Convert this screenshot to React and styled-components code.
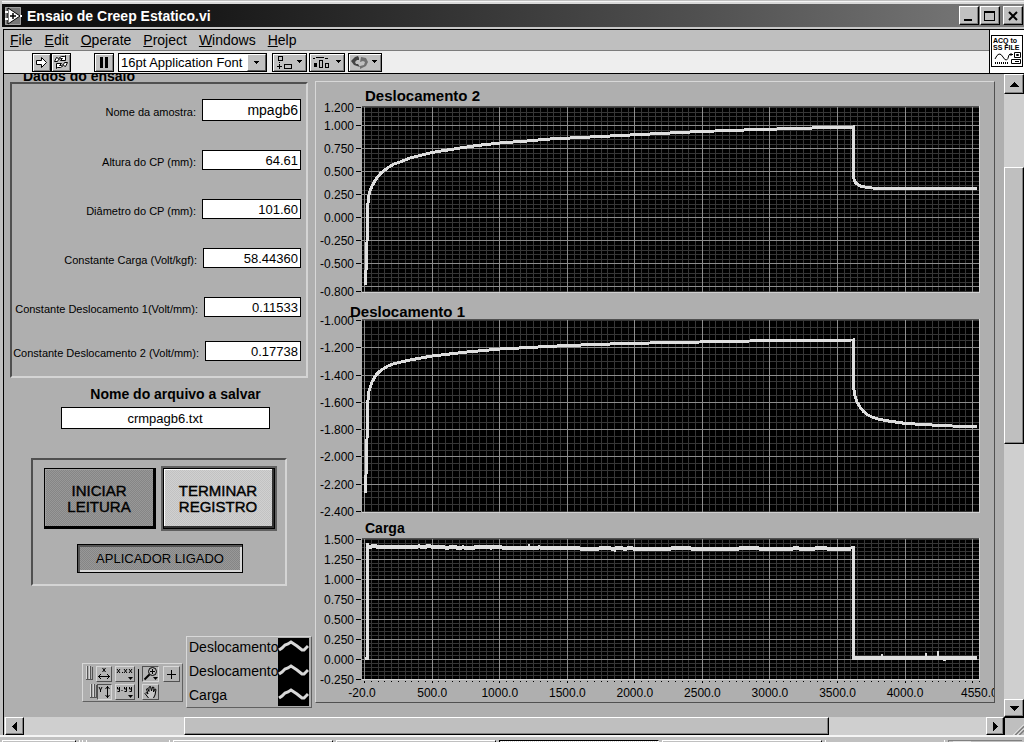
import React from "react";
import styled, { createGlobalStyle, css } from "styled-components";

const GlobalStyle = createGlobalStyle`
  *, *::before, *::after { box-sizing: border-box; }
  body { margin: 0; background: #c0c0c0; font-family: "Liberation Sans", Arial, sans-serif; color: #000; }
  button, input, select { font-family: inherit; color: #000; border-radius: 0; }
  h1, h2, p { margin: 0; }
`;

const sans = '"Liberation Sans", Arial, sans-serif';

const raised = css`
  border: 1px solid;
  border-color: #fff #000 #000 #fff;
  box-shadow: inset -1px -1px 0 #808080;
`;

/* ---------- window frame ---------- */

const Window = styled.div`
  min-height: 100vh;
  display: flex;
  flex-direction: column;
  background: #c0c0c0;
  overflow: hidden;
`;

const TitleBar = styled.header`
  display: flex;
  align-items: center;
  height: 25px;
  margin: 4px 0 0 2px;
  padding: 0 1px 0 3px;
  background: linear-gradient(90deg, #0c0c0c 0%, #161616 18%, #505050 68%, #7c7c7c 100%);
  box-shadow: 0 -2px 0 #d8d8d8, 0 -3px 0 #f4f4f4;
  border-bottom: 2px solid #c8c8c8;
`;

const Title = styled.h1`
  flex: 1;
  padding-left: 5px;
  color: #fff;
  font: bold 14px/20px ${sans};
`;

const CaptionButton = styled.button`
  ${raised}
  width: 20px;
  height: 19px;
  padding: 0;
  margin-left: ${(p) => (p.$apart ? 3 : 1)}px;
  background: #c0c0c0;
  display: grid;
  place-items: center;
`;

const Bars = styled.div`
  display: flex;
  margin-left: 3px;
  border: solid #000;
  border-width: 1px 0 1px 1px;
  background: #fff;
`;

const BarStack = styled.div`
  flex: 1;
  min-width: 0;
`;

const MenuBar = styled.nav`
  display: flex;
  align-items: center;
  gap: 12px;
  height: 21px;
  padding-left: 6px;
  background: #bfbfbf;
  border-bottom: 1px solid #7c7c7c;
`;

const MenuItem = styled.a`
  color: #000;
  text-decoration: none;
  font: 14px/18px ${sans};
`;

const ToolBar = styled.div`
  display: flex;
  align-items: center;
  height: 22px;
  padding-left: 28px;
  background: #eee;
`;

const ToolButton = styled.button`
  flex: none;
  width: ${(p) => p.$w}px;
  height: 19px;
  margin-left: ${(p) => p.$gap || 0}px;
  padding: 0;
  display: grid;
  place-items: center;
  background: #c0c0c0;
  border: 1px solid #000;
  box-shadow: inset 1px 1px 0 #fff, inset -1px -1px 0 #808080;
`;

const FontPicker = styled.div`
  position: relative;
  width: 149px;
  height: 19px;
  margin: 0 2px 0 4px;
`;

const FontSelect = styled.select`
  appearance: none;
  width: 100%;
  height: 19px;
  padding: 0 0 0 2px;
  background: #fff;
  border: 1px solid #000;
  font: 13px/16px ${sans};
`;

const PickerArrow = styled.span`
  position: absolute;
  top: 1px;
  right: 1px;
  width: 19px;
  height: 17px;
  display: grid;
  place-items: center;
  background: #c0c0c0;
  border: 1px solid;
  border-color: #fff #555 #555 #fff;
  pointer-events: none;
`;

const ViIcon = styled.div`
  flex: none;
  width: 35px;
  padding: 5px 1px 0;
  border-left: 1px solid #000;
`;

const ViIconFace = styled.div`
  height: 32px;
  padding: 1px;
  border: 1px solid #000;
  font: bold 7px/7px ${sans};
  white-space: nowrap;
  overflow: hidden;
  svg { display: block; }
`;

/* ---------- body ---------- */

const Body = styled.div`
  flex: 1;
  display: flex;
  margin-left: 3px;
  border-left: 1px solid #000;
`;

const FrontPanel = styled.main`
  flex: 1;
  min-width: 0;
  display: flex;
  align-items: flex-start;
  background: #afafaf;
`;

const LeftColumn = styled.div`
  flex: none;
  width: 311px;
  display: flex;
  flex-direction: column;
`;

const PanelTitle = styled.h2`
  display: flex;
  align-items: flex-end;
  height: 8px;
  padding-left: 19px;
  overflow: hidden;
  font: bold 14px/12px ${sans};
`;

const sunken = css`
  border: 2px solid;
  border-color: #505050 #d4d4d4 #d4d4d4 #505050;
`;

const DataPanel = styled.div`
  ${sunken}
  display: flex;
  flex-direction: column;
  gap: 29px;
  height: 296px;
  margin: 0 7px 0 6px;
  padding: 15px 5px 0 0;
`;

const FieldRow = styled.div`
  display: flex;
  align-items: center;
  justify-content: flex-end;
  gap: 6px;
  margin-top: ${(p) => (p.$tight ? -5 : 0)}px;
`;

const FieldLabel = styled.label`
  font: 11px/14px ${sans};
  white-space: nowrap;
  padding-top: 3px;
`;

const FieldInput = styled.input`
  width: ${(p) => p.$w}px;
  height: ${(p) => p.$h}px;
  padding: 0 2px;
  background: #fff;
  border: 1px solid #000;
  text-align: ${(p) => p.$align || "right"};
  font: ${(p) => (p.$small ? 13 : 14)}px/18px ${sans};
`;

const FileBlock = styled.div`
  display: flex;
  flex-direction: column;
  align-items: center;
  gap: 5px;
  margin: 8px 7px 0 25px;
  width: 272px;
`;

const FileLabel = styled.label`
  font: bold 14px/16px ${sans};
  padding-left: 21px;
`;

const ControlPanel = styled.section`
  ${sunken}
  width: 256px;
  height: 128px;
  margin: 29px 0 0 27px;
  padding: 6px 0 0 11px;
`;

const ButtonRow = styled.div`
  display: flex;
  align-items: center;
  gap: 5px;
`;

const dither = (a, b) => `repeating-conic-gradient(${a} 0% 25%, ${b} 0% 50%) 0 0 / 2px 2px`;

const BigButton = styled.button`
  width: ${(p) => (p.$lit ? 116 : 112)}px;
  height: ${(p) => (p.$lit ? 65 : 61)}px;
  padding: 0 2px 0 0;
  font: 500 15px/16px ${sans};
  -webkit-text-stroke: 0.4px #000;
  background: ${(p) => (p.$lit ? dither("#c2c2c2", "#d0d0d0") : dither("#868686", "#989898"))};
  border: ${(p) => (p.$lit ? "2px solid #606060" : "1px solid #000")};
  box-shadow: ${(p) =>
    p.$lit
      ? "inset 0 0 0 1px #000, inset -3px -3px 0 #303030, inset 2px 2px 0 #fff"
      : "inset -2px -2px 0 #000, inset 1px 1px 0 #a0a0a0"};
`;

const StatusButton = styled.button`
  display: block;
  width: 166px;
  height: 29px;
  margin: 13px 0 0 33px;
  padding: 0;
  font: 13px/16px ${sans};
  background: ${dither("#868686", "#989898")};
  border: 1px solid #000;
  box-shadow: inset 2px 2px 0 #555, inset -2px -2px 0 #d8d8d8;
`;

const BottomRow = styled.div`
  display: flex;
  align-items: center;
  gap: 3px;
  height: 72px;
  margin: 50px 0 0 78px;
`;

const Palette = styled.div`
  flex: none;
  display: flex;
  gap: 3px;
  width: 101px;
  height: 39px;
  margin-top: 21px;
  padding: 2px 2px 0 3px;
  border: 1px solid;
  border-color: #d8d8d8 #606060 #606060 #d8d8d8;
`;

const PaletteColumn = styled.div`
  display: flex;
  flex-direction: column;
  gap: 2px;
`;

const PaletteRow = styled.div`
  display: flex;
  gap: ${(p) => p.$gap}px;
  padding-left: ${(p) => p.$indent || 0}px;
`;

const PaletteButton = styled.button`
  width: ${(p) => p.$w}px;
  height: 16px;
  padding: 0;
  display: grid;
  place-items: center;
  background: #b4b4b4;
  border: 1px solid;
  border-color: ${(p) => (p.$down ? "#505050 #d8d8d8 #d8d8d8 #505050" : "#d8d8d8 #505050 #505050 #d8d8d8")};
`;

const Divider = styled.div`
  width: 2px;
  height: 29px;
  margin-top: 3px;
  background: #000;
`;

const Legend = styled.div`
  flex: none;
  display: flex;
  width: 126px;
  height: 72px;
  padding: 1px 2px 1px 2px;
  border: 1px solid;
  border-color: #d8d8d8 #606060 #606060 #d8d8d8;
`;

const LegendNames = styled.div`
  flex: 1;
  margin-top: -3px;
  font: 14px/24px ${sans};
`;

const LegendName = styled.div`
  width: 89px;
  height: 24px;
`;

const LegendSwatches = styled.svg`
  flex: none;
  display: block;
  background: #000;
`;

/* ---------- charts ---------- */

const ChartPanel = styled.section`
  flex: 1;
  min-width: 0;
  height: 622px;
  margin: 7px 9px 14px 0;
  padding-right: 14px;
  overflow: hidden;
  border: 1px solid;
  border-color: #d8d8d8 #505050 #505050 #d8d8d8;
`;

const ChartTitle = styled.h2`
  display: flex;
  align-items: flex-end;
  height: ${(p) => p.$h}px;
  padding: 0 0 ${(p) => p.$drop}px ${(p) => p.$indent}px;
  font: bold ${(p) => p.$size}px/14px ${sans};
`;

const ChartRow = styled.div`
  display: grid;
  grid-template-columns: 46px 1fr;
`;

const AxisSvg = styled.svg`
  display: block;
  width: 46px;
  overflow: visible;
  font: 12px ${sans};
`;

const PlotSvg = styled.svg`
  display: block;
  width: 100%;
  background: #000;
`;

const XAxisSvg = styled.svg`
  display: block;
  width: 100%;
  overflow: visible;
  font: 12px ${sans};
`;

/* ---------- scroll bars and task bar ---------- */

const VScroll = styled.div`
  flex: none;
  display: flex;
  flex-direction: column;
  width: 20px;
  background: #cfcfcf;
`;

const HScroll = styled.div`
  display: flex;
  height: 18px;
  margin-left: 3px;
  padding-left: 1px;
  border-left: 1px solid #000;
  background: #cfcfcf;
`;

const ScrollButton = styled.button`
  flex: none;
  width: ${(p) => p.$w}px;
  height: ${(p) => p.$h}px;
  padding: 0;
  display: grid;
  place-items: center;
  background: #c0c0c0;
  ${raised}
`;

const Track = styled.div`
  flex: ${(p) => p.$part} 1 0;
`;

const Thumb = styled.div`
  flex: ${(p) => p.$part} 1 0;
  background: #bfbfbf;
  ${raised}
`;

const Corner = styled.div`
  flex: none;
  width: 20px;
  background: #bfbfbf;
  border-top: 1px solid #000;
  border-left: 1px solid #000;
`;

const TaskBar = styled.footer`
  display: flex;
  gap: 3px;
  height: 8px;
  padding: 3px 2px 0;
  background: #c0c0c0;
  border-top: 2px solid #f4f4f4;
`;

const taskPart = css`
  flex: ${(p) => p.$part} 1 ${(p) => p.$part}px;
`;

const TaskItem = styled.div`
  ${taskPart}
  padding-left: 7px;
  border: solid;
  border-width: 1px 1px 0 1px;
  border-color: ${(p) => (p.$active ? "#000 #fff #fff #000" : "#fff #000 #000 #fff")};
  background: ${(p) => (p.$active ? dither("#fff", "#d8d8d8") : "#c0c0c0")};
`;

const TaskGap = styled.div`
  ${taskPart}
  border: solid;
  border-width: 0 1px;
  border-color: #808080 #fff;
`;

const TrayBox = styled.div`
  ${taskPart}
  padding-left: 4px;
  border: solid #808080;
  border-width: 1px 0 0 1px;
`;

const Crumb = styled.svg`
  display: block;
`;

/* ---------- data ---------- */

const fields = [
  { id: "amostra", label: "Nome da amostra:", value: "mpagb6", w: 99, h: 22 },
  { id: "altura", label: "Altura do CP (mm):", value: "64.61", w: 99, h: 20, small: true },
  { id: "diametro", label: "Diâmetro do CP (mm):", value: "101.60", w: 99, h: 20, small: true },
  { id: "carga", label: "Constante Carga (Volt/kgf):", value: "58.44360", w: 98, h: 20, small: true },
  { id: "desloc1", label: "Constante Deslocamento 1(Volt/mm):", value: "0.11533", w: 97, h: 20, small: true },
  { id: "desloc2", label: "Constante Deslocamento 2 (Volt/mm):", value: "0.17738", w: 96, h: 20, small: true, tight: true },
];

const X_MIN = -20;
const X_MAX = 4555;
const PLOT_W = 618;

const creep2 =
  "3.5,179 5,136 5.5,104 6.5,91 8,85 10,80 14,73 19,67 23,64 27,61 32,58 38,56 48,52 60,49 70,46.5 95,42.5 115,39.5 138,37 165,35 188,33 238,30.5 288,28 338,25.5 388,23.8 438,22.3 491,21 491,65 492,73 493,76 495,78 499,80.5 510,82 535,82.5 615,82.5";
const creep1 =
  "3.5,174 5,120 6,81 7,72 10,63 14,56 17,53 21,50 26,47 31,45 39,43 48,41 70,37 105,33 138,30 205,26.5 248,25 288,24 338,23 388,22 438,21.5 491,21 491,60 492,71 493,77 495,83 498,88 501,92 505,95.5 510,98 516,100 523,101.5 544,104.5 578,106.5 615,108";

const noise = [0, 1, -1, 0, 0, 1, 0, -1, 1, 0, 0, -1, 0, 1, 0, 0];
const loadBand = (() => {
  const pts = [];
  for (let x = 5; x < 490; x += 4) {
    const base = 8.5 + (Math.min(x, 240) / 240) * 2;
    pts.push(`${x},${base + noise[(x * 7 + (x >> 4)) % 16] * 0.6}`);
  }
  return pts.join(" ");
})();

const chartDefs = [
  {
    name: "Deslocamento 2", titleH: 24, drop: 3, indent: 49, size: 15, h: 187,
    top: 1.2, bottom: -0.8, y0: 1, span: 184,
    ticks: [1.2, 1.0, 0.75, 0.5, 0.25, 0, -0.25, -0.5, -0.8], major: [1, 0.75, 0.5, 0.25, 0, -0.25, -0.5, -0.75],
    curves: [{ points: creep2, width: 3 }],
  },
  {
    name: "Deslocamento 1", titleH: 26, drop: 0, indent: 34, size: 15, h: 194,
    top: -1, bottom: -2.4, y0: 1, span: 191,
    ticks: [-1, -1.2, -1.4, -1.6, -1.8, -2, -2.2, -2.4], major: [-1.2, -1.4, -1.6, -1.8, -2, -2.2],
    curves: [{ points: creep1, width: 3 }],
  },
  {
    name: "Carga", titleH: 25, drop: 3, indent: 49, size: 14, h: 142,
    top: 1.5, bottom: -0.25, y0: 1, span: 140,
    ticks: [1.5, 1.25, 1, 0.75, 0.5, 0.25, 0, -0.25], major: [1.25, 1, 0.75, 0.5, 0.25, 0],
    curves: [
      { points: "3,120 5,120 5,5", width: 3 },
      { points: loadBand, width: 4 },
      { points: "167,10 167,6", width: 2 },
      { points: "253,11 253,14", width: 2 },
      { points: "489,9 491,9 491,119", width: 3 },
      { points: "490,119.5 615,119.5", width: 4 },
      { points: "520,118 520,116", width: 2 },
      { points: "564,118 564,115", width: 2 },
      { points: "576,118 576,113", width: 2 },
      { points: "581,121.5 584,121.5", width: 2 },
    ],
  },
];

const yPos = (c, v) => Math.round(c.y0 + ((c.top - v) / (c.top - c.bottom)) * c.span);
const xPct = (v) => `${((v - X_MIN) / (X_MAX - X_MIN)) * 100}%`;
const range = (from, to, step) => {
  const out = [];
  for (let v = from; v <= to + step / 100; v += step) out.push(v);
  return out;
};

function Chart({ c }) {
  return (
    <>
      <ChartTitle $h={c.titleH} $drop={c.drop} $indent={c.indent} $size={c.size}>{c.name}</ChartTitle>
      <ChartRow>
        <AxisSvg height={c.h} aria-hidden="true">
          {c.ticks.map((t) => (
            <g key={t}>
              <text x="38" y={yPos(c, t) + 5} textAnchor="end">{t.toFixed(3)}</text>
              <rect x="40" y={yPos(c, t)} width="5" height="1" />
            </g>
          ))}
        </AxisSvg>
        <PlotSvg height={c.h} role="img" aria-label={c.name} shapeRendering="crispEdges">
          {range(0, 4550, 50).map((v) => (
            <line key={v} x1={xPct(v)} x2={xPct(v)} y1="0" y2="100%" stroke="#363636" />
          ))}
          {range(c.bottom, c.top, 0.05).map((v) => (
            <line key={v} x1="0" x2="100%" y1={yPos(c, v) + 0.5} y2={yPos(c, v) + 0.5} stroke="#363636" />
          ))}
          {range(0, 4500, 500).map((v) => (
            <line key={v} x1={xPct(v)} x2={xPct(v)} y1="0" y2="100%" stroke="#8c8c8c" />
          ))}
          {c.major.map((v) => (
            <line key={v} x1="0" x2="100%" y1={yPos(c, v) + 0.5} y2={yPos(c, v) + 0.5} stroke="#8c8c8c" />
          ))}
          <rect x="0" y="0" width="100%" height="1" fill="#505050" />
          <rect x="0" y={c.h - 1} width="100%" height="1" fill="#d0d0d0" />
          <line x1="100%" x2="100%" y1="0" y2="100%" stroke="#d0d0d0" strokeWidth="2" />
          <svg width="100%" height={c.h} viewBox={`0 0 ${PLOT_W} ${c.h}`} preserveAspectRatio="none">
            {c.curves.map((k) => (
              <polyline key={k.points} points={k.points} fill="none" stroke="#dedede" strokeWidth={k.width} vectorEffect="non-scaling-stroke" />
            ))}
          </svg>
        </PlotSvg>
      </ChartRow>
    </>
  );
}

function XAxis() {
  return (
    <ChartRow>
      <span />
      <XAxisSvg height="22" aria-hidden="true">
        {range(0, 4550, 50).map((v) => (
          <line key={v} x1={xPct(v)} x2={xPct(v)} y1="1" y2={v % 500 === 0 ? 3 : 2} stroke="#000" shapeRendering="crispEdges" />
        ))}
        {[-20, 500, 1000, 1500, 2000, 2500, 3000, 3500, 4000, 4550].map((v) => (
          <text key={v} x={xPct(v)} y="17" textAnchor="middle">{v.toFixed(1)}</text>
        ))}
      </XAxisSvg>
    </ChartRow>
  );
}

/* ---------- drawings ---------- */

const arrows = {
  up: { w: 9, h: 5, d: "M4 0h1v1h1v1h1v1h1v1h1v1H0V4h1V3h1V2h1V1h1z" },
  down: { w: 9, h: 5, d: "M0 0h9v1H8v1H7v1H6v1H5v1H4V4H3V3H2V2H1V1H0z" },
  left: { w: 5, h: 9, d: "M5 0v9H4V8H3V7H2V6H1V5H0V4h1V3h1V2h1V1h1V0z" },
  right: { w: 5, h: 9, d: "M0 0v9h1V8h1V7h1V6h1V5h1V4H4V3H3V2H2V1H1V0z" },
};

const Arrow = ({ dir }) => {
  const a = arrows[dir];
  return (
    <svg width={a.w} height={a.h} aria-hidden="true">
      <path d={a.d} />
    </svg>
  );
};

const AppSvg = styled.svg`
  flex: none;
`;

const AppIcon = () => (
  <AppSvg width="17" height="18" viewBox="0 0 17 18" aria-hidden="true">
    <rect x="0.5" y="0.5" width="15" height="17" fill="#777" stroke="#fff" strokeDasharray="1 1" />
    <path d="M3 1v16l12-8z" fill="#fff" stroke="#000" />
    <path d="M5 9h6M8 6v6" stroke="#000" strokeWidth="1.5" />
    <path d="M0 5h3M0 12h3M15 9h2" stroke="#fff" strokeWidth="2" />
  </AppSvg>
);

const LockBars = () => (
  <svg width="7" height="14" viewBox="0 0 7 14" shapeRendering="crispEdges" aria-hidden="true">
    <path d="M0.5 0v13M3.5 0v13" stroke="#d8d8d8" />
    <path d="M1.5 0v14M4.5 0v14M6.5 1v13" stroke="#555" />
    <path d="M0 13.5h7" stroke="#555" />
  </svg>
);

const LegendLine = ({ y }) => (
  <polyline points={`1,${y + 7} 4,${y + 5} 7,${y + 2} 10,${y + 1} 13,${y - 1} 16,${y + 1} 19,${y + 3} 24,${y + 7} 26,${y + 7} 30,${y + 3}`} fill="none" stroke="#d8d8d8" strokeWidth="3" />
);

export default function App() {
  return (
    <Window>
      <GlobalStyle />
      <TitleBar>
        <AppIcon />
        <Title>Ensaio de Creep Estatico.vi</Title>
        <CaptionButton aria-label="Minimize">
          <svg width="12" height="12" shapeRendering="crispEdges"><rect x="1" y="9" width="8" height="2" /></svg>
        </CaptionButton>
        <CaptionButton aria-label="Maximize">
          <svg width="12" height="12" shapeRendering="crispEdges"><path d="M0.5 1.5h10v9h-10z" fill="none" stroke="#000" /><rect x="0" y="1" width="11" height="2" /></svg>
        </CaptionButton>
        <CaptionButton aria-label="Close" $apart>
          <svg width="12" height="12"><path d="M2 2l8 8M10 2l-8 8" stroke="#000" strokeWidth="2" /></svg>
        </CaptionButton>
      </TitleBar>

      <Bars>
        <BarStack>
          <MenuBar>
            {["File", "Edit", "Operate", "Project", "Windows", "Help"].map((m) => (
              <MenuItem key={m} href="#"><u>{m[0]}</u>{m.slice(1)}</MenuItem>
            ))}
          </MenuBar>
          <ToolBar>
            <ToolButton $w={19} aria-label="Run">
              <svg width="15" height="15"><path d="M2.5 5.5h5v-3l5 5-5 5v-3h-5z" fill="#fff" stroke="#000" /></svg>
            </ToolButton>
            <ToolButton $w={20} aria-label="Run continuously">
              <svg width="16" height="16" viewBox="0 0 16 16" fill="#fff" stroke="#000">
                <path d="M1.5 7.5l2-4 2 1 3-2h3l1-1v5h-5l2-2h-2l-2 1-1 2z" />
                <path d="M14.5 8.5l-2 4-2-1-3 2h-3l-1 1v-5h5l-2 2h2l2-1 1-2z" />
              </svg>
            </ToolButton>
            <ToolButton $w={20} $gap={23} aria-label="Pause">
              <svg width="12" height="11" shapeRendering="crispEdges"><path d="M2 0h3v11H2zM7 0h3v11H7z" /></svg>
            </ToolButton>
            <FontPicker>
              <FontSelect aria-label="Font" defaultValue="16pt Application Font">
                <option>16pt Application Font</option>
              </FontSelect>
              <PickerArrow>
                <svg width="7" height="5" shapeRendering="crispEdges"><path d="M1 1h5v1H5v1H4v1H3V3H2V2H1z" /></svg>
              </PickerArrow>
            </FontPicker>
            <ToolButton $w={35} $gap={3} aria-label="Align objects">
              <svg width="31" height="15" fill="none" stroke="#000" shapeRendering="crispEdges">
                <path d="M4.5 1.5h4v4h-4zM10.5 9.5h7v4h-7zM3 11.5h5M5.5 9v5M5.5 7v1" />
                <path d="M23 5h5v1h-1v1h-1v1h-1v-1h-1v-1h-1z" fill="#000" stroke="none" />
              </svg>
            </ToolButton>
            <ToolButton $w={36} $gap={2} aria-label="Distribute objects">
              <svg width="32" height="15" fill="none" stroke="#000" shapeRendering="crispEdges">
                <path d="M2 3.5h2M5 2.5h8M14 3.5h3M8.5 5.5h3v7h-3zM14.5 8.5h3v4h-3z" />
                <rect x="3" y="8" width="3" height="4" fill="#000" stroke="none" />
                <path d="M25 5h5v1h-1v1h-1v1h-1v-1h-1v-1h-1z" fill="#000" stroke="none" />
              </svg>
            </ToolButton>
            <ToolButton $w={34} $gap={3} aria-label="Reorder objects">
              <svg width="30" height="15">
                <path d="M8 1L5 2 1 6l3 4 6 2-2-3h-2l-1-2 2-2h2V3z" fill="#444" />
                <path d="M10 14v-3l4-1 1-3-2-1-3 1 1-5 5 1 2 4-2 4z" fill="#707070" />
                <path d="M22 5h5v1h-1v1h-1v1h-1v-1h-1v-1h-1z" shapeRendering="crispEdges" />
              </svg>
            </ToolButton>
          </ToolBar>
        </BarStack>
        <ViIcon>
          <ViIconFace>
            <div>ACQ to</div>
            <div>SS FILE</div>
            <svg width="29" height="15" fill="none" stroke="#000">
              <path d="M2 8q4-9 8-2t6-2M16 3.5h4M18 2v3" />
              <path d="M2 12h14" strokeDasharray="1 1" strokeWidth="2" />
              <path d="M21.5 1.5h6v5h-6zM18.5 8.5h9v4h-9zM22 10.5h4" />
              <path d="M23.5 3.5h2v1h-2z" />
            </svg>
          </ViIconFace>
        </ViIcon>
      </Bars>

      <Body>
        <FrontPanel>
          <LeftColumn>
            <PanelTitle>Dados do ensaio</PanelTitle>
            <DataPanel>
              {fields.map((f) => (
                <FieldRow key={f.id} $tight={f.tight}>
                  <FieldLabel htmlFor={f.id}>{f.label}</FieldLabel>
                  <FieldInput id={f.id} defaultValue={f.value} $w={f.w} $h={f.h} $small={f.small} />
                </FieldRow>
              ))}
            </DataPanel>
            <FileBlock>
              <FileLabel htmlFor="arquivo">Nome do arquivo a salvar</FileLabel>
              <FieldInput id="arquivo" defaultValue="crmpagb6.txt" $w={209} $h={22} $align="center" $small />
            </FileBlock>
            <ControlPanel>
              <ButtonRow>
                <BigButton>INICIAR<br />LEITURA</BigButton>
                <BigButton $lit>TERMINAR<br />REGISTRO</BigButton>
              </ButtonRow>
              <StatusButton>APLICADOR LIGADO</StatusButton>
            </ControlPanel>
            <BottomRow>
              <Palette>
                <PaletteColumn>
                  <PaletteRow $gap={3}>
                    <LockBars />
                    <PaletteButton $w={16} aria-label="Autoscale X">
                      <svg width="14" height="14" fill="none" stroke="#000">
                        <path d="M5.5 1l3 4M8.5 1l-3 4M1 9.5h12M4 7L1.5 9.5 4 12M10 7l2.5 2.5L10 12" />
                      </svg>
                    </PaletteButton>
                  </PaletteRow>
                  <PaletteRow $gap={0} $indent={4}>
                    <LockBars />
                    <PaletteButton $w={15} $down aria-label="Autoscale Y">
                      <svg width="13" height="14" fill="none" stroke="#000">
                        <path d="M1 2l1.5 3L4 2M2.5 5v2M9.5 1v12M7.5 4l2-2.5 2 2.5M7.5 10l2 2.5 2-2.5" />
                      </svg>
                    </PaletteButton>
                  </PaletteRow>
                </PaletteColumn>
                <PaletteColumn>
                  <PaletteButton $w={20} aria-label="X format">
                    <svg width="18" height="14" fill="none" stroke="#000">
                      <path d="M1 2l3 4M4 2L1 6M8 2l3 4M11 2L8 6M13 2l3 4M16 2l-3 4M6 5.5h1" />
                      <path d="M12 10h5l-2.5 3z" fill="#000" stroke="none" />
                    </svg>
                  </PaletteButton>
                  <PaletteButton $w={20} aria-label="Y format">
                    <svg width="18" height="14" fill="none" stroke="#000">
                      <path d="M1.5 2v2h2M3.5 2v4.5h-2M8.5 2v2h2M10.5 2v4.5h-2M13.5 2v2h2M15.5 2v4.5h-2M5.5 5.5h1" />
                      <path d="M12 10h5l-2.5 3z" fill="#000" stroke="none" />
                    </svg>
                  </PaletteButton>
                </PaletteColumn>
                <Divider />
                <PaletteColumn>
                  <PaletteRow $gap={4}>
                    <PaletteButton $w={17} $down aria-label="Zoom">
                      <svg width="15" height="14" fill="none" stroke="#000">
                        <circle cx="9.5" cy="4.5" r="4" /><path d="M7 4.5h5M9.5 2v5" /><path d="M6.5 7.5L1.5 12.5" strokeWidth="2" />
                        <path d="M10 10h5l-2.5 3z" fill="#000" stroke="none" />
                      </svg>
                    </PaletteButton>
                    <PaletteButton $w={17} aria-label="Cursor">
                      <svg width="15" height="14" shapeRendering="crispEdges"><path d="M3 7.5h9M7.5 3v9" stroke="#000" /></svg>
                    </PaletteButton>
                  </PaletteRow>
                  <PaletteButton $w={17} aria-label="Pan">
                    <svg width="15" height="14" fill="#c8c8c8" stroke="#000">
                      <path d="M5.5 13L2 8.5l1-1 2 1.5L3.5 4l1-.5L6 6.5 6 2l1.5-.5L8.5 6 9.5 2l1.5.5L10.5 7l1.5-3 1 .5L12 10l-1.5 3" />
                    </svg>
                  </PaletteButton>
                </PaletteColumn>
              </Palette>
              <Legend>
                <LegendNames>
                  <LegendName>Deslocamento</LegendName>
                  <LegendName>Deslocamento</LegendName>
                  <LegendName>Carga</LegendName>
                </LegendNames>
                <LegendSwatches width="31" height="68" aria-hidden="true">
                  <LegendLine y={5} /><LegendLine y={29} /><LegendLine y={53} />
                </LegendSwatches>
              </Legend>
            </BottomRow>
          </LeftColumn>

          <ChartPanel>
            {chartDefs.map((c) => <Chart key={c.name} c={c} />)}
            <XAxis />
          </ChartPanel>
        </FrontPanel>

        <VScroll>
          <ScrollButton $w={20} $h={20} aria-label="Scroll up"><Arrow dir="up" /></ScrollButton>
          <Track $part={73} />
          <Thumb $part={276} />
          <Track $part={255} />
          <ScrollButton $w={20} $h={18} aria-label="Scroll down"><Arrow dir="down" /></ScrollButton>
        </VScroll>
      </Body>

      <HScroll>
        <ScrollButton $w={19} $h={18} aria-label="Scroll left"><Arrow dir="left" /></ScrollButton>
        <Track $part={160} />
        <Thumb $part={645} />
        <Track $part={157} />
        <ScrollButton $w={18} $h={18} aria-label="Scroll right"><Arrow dir="right" /></ScrollButton>
        <Corner>
          <svg width="19" height="17" aria-hidden="true">
            <path d="M10 17L19 8M14 17l5-5" stroke="#808080" strokeWidth="2" /><path d="M8.5 17L19 6.5M12.5 17l6.5-6.5" stroke="#fff" />
          </svg>
        </Corner>
      </HScroll>

      <TaskBar>
        <TaskItem $part={74} />
        <TaskGap $part={4} />
        <TaskGap $part={84} />
        <TaskItem $part={160} />
        <TaskItem $part={160}><Crumb width="8" height="2"><path d="M0 1.5h6" stroke="#000" /></Crumb></TaskItem>
        <TaskItem $part={160} $active />
        <TaskItem $part={160}><Crumb width="16" height="2"><path d="M0 1.5h6M8 1.5h4" stroke="#000" /></Crumb></TaskItem>
        <TaskGap $part={120} />
        <TrayBox $part={74}><Crumb width="20" height="2"><path d="M0 1.5h18" stroke="#fff" strokeWidth="2" /></Crumb></TrayBox>
      </TaskBar>
    </Window>
  );
}
